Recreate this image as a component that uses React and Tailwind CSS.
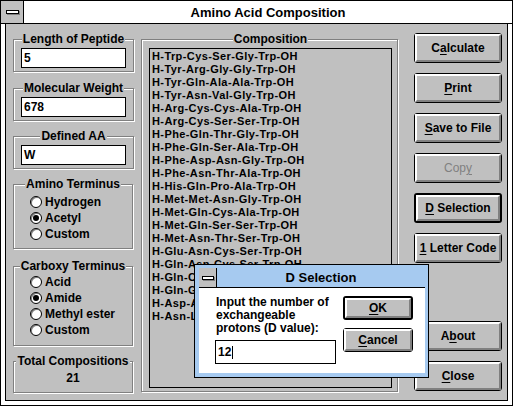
import React from 'react';

const ROWS = [
  'H-Trp-Cys-Ser-Gly-Trp-OH',
  'H-Tyr-Arg-Gly-Gly-Trp-OH',
  'H-Tyr-Gln-Ala-Ala-Trp-OH',
  'H-Tyr-Asn-Val-Gly-Trp-OH',
  'H-Arg-Cys-Cys-Ala-Trp-OH',
  'H-Arg-Cys-Ser-Ser-Trp-OH',
  'H-Phe-Gln-Thr-Gly-Trp-OH',
  'H-Phe-Gln-Ser-Ala-Trp-OH',
  'H-Phe-Asp-Asn-Gly-Trp-OH',
  'H-Phe-Asn-Thr-Ala-Trp-OH',
  'H-His-Gln-Pro-Ala-Trp-OH',
  'H-Met-Met-Asn-Gly-Trp-OH',
  'H-Met-Gln-Cys-Ala-Trp-OH',
  'H-Met-Gln-Ser-Ser-Trp-OH',
  'H-Met-Asn-Thr-Ser-Trp-OH',
  'H-Glu-Asn-Cys-Ser-Trp-OH',
  'H-Gln-Asn-Cys-Ser-Trp-OH',
  'H-Gln-Cys-Gly-Ser-Trp-OH',
  'H-Gln-Gln-Gly-Gly-Trp-OH',
  'H-Asp-Asn-Gly-Ser-Trp-OH',
  'H-Asn-Leu-Gly-Gly-Trp-OH',
];

// mnemonic letter
function U({ children }) {
  return <span className="underline decoration-1 underline-offset-[2px]">{children}</span>;
}

function SysMenu({ className = '' }) {
  return (
    <div className={`flex shrink-0 items-center justify-center border-r border-black bg-[#c0c0c0] ${className}`}>
      <div className="h-[4px] w-[13px] border border-black bg-white shadow-[1px_1px_0_#808080]" />
    </div>
  );
}

function Button({ children, isDefault, disabled, className = '' }) {
  return (
    <div className={`${isDefault ? 'border-2' : 'border'} shrink-0 rounded-[3px] border-black bg-[#c0c0c0] ${className}`}>
      <div className="flex h-full items-center justify-center border-2 border-t-white border-l-white border-r-[#808080] border-b-[#808080]">
        <span className={disabled ? 'font-normal text-[#808080]' : ''}>{children}</span>
      </div>
    </div>
  );
}

function Group({ label, className = '', children }) {
  return (
    <fieldset className={`border border-[#808080] shadow-[inset_1px_1px_0_#fff,1px_1px_0_#fff] ${className}`}>
      <legend className="mx-auto bg-[#c0c0c0] px-[1px] leading-[13px]">{label}</legend>
      {children}
    </fieldset>
  );
}

function Edit({ children, className = '' }) {
  return (
    <div className={`flex items-center border border-black bg-white pl-[2px] ${className}`}>{children}</div>
  );
}

function Radio({ label, checked }) {
  return (
    <div className="flex h-[16px] items-center gap-[3px] pl-[16px]">
      <span className="flex h-[12px] w-[12px] items-center justify-center rounded-full border border-black bg-white shadow-[inset_1px_1px_0_#808080]">
        {checked && <span className="h-[6px] w-[6px] rounded-full bg-black" />}
      </span>
      <span>{label}</span>
    </div>
  );
}

export default function App() {
  return (
    <div className="relative flex h-[406px] w-[513px] flex-col border border-black bg-white font-['Liberation_Sans',Arial,sans-serif] text-[12px] font-bold leading-[13px] text-black">
      {/* title bar */}
      <div className="flex h-[23px] shrink-0 border-b border-black">
        <SysMenu className="w-[23px]" />
        <div className="flex flex-1 items-center justify-center text-[13px]">Amino Acid Composition</div>
      </div>

      <div className="flex-1 px-[4px] pb-[4px]">
        <div className="flex h-full border-x border-b border-black bg-[#c0c0c0] pl-[7px] pt-[9px]">
          {/* left column */}
          <div className="flex w-[120px] flex-col">
            <Group label="Length of Peptide" className="px-[7px] pb-[3px] pt-[2px]">
              <Edit className="h-[20px] w-[105px]">5</Edit>
            </Group>
            <Group label="Molecular Weight" className="mt-[10px] px-[7px] pb-[3px] pt-[2px]">
              <Edit className="h-[20px] w-[105px]">678</Edit>
            </Group>
            <Group label="Defined AA" className="mt-[9px] px-[7px] pb-[3px] pt-[2px]">
              <Edit className="h-[20px] w-[105px]">W</Edit>
            </Group>
            <Group label="Amino Terminus" className="mt-[9px] pb-[6px] pt-[3px]">
              <Radio label="Hydrogen" />
              <Radio label="Acetyl" checked />
              <Radio label="Custom" />
            </Group>
            <Group label="Carboxy Terminus" className="mt-[11px] pb-[7px] pt-[1px]">
              <Radio label="Acid" />
              <Radio label="Amide" checked />
              <Radio label="Methyl ester" />
              <Radio label="Custom" />
            </Group>
            <Group label="Total Compositions" className="mt-[9px] pb-[7px] pt-[4px] text-center">
              <div>21</div>
            </Group>
          </div>

          {/* composition list */}
          <Group label="Composition" className="ml-[8px] h-[359px] w-[256px] pb-[3px] pl-[7px] pr-[5px] pt-[2px]">
            <div className="h-[340px] w-[243px] overflow-hidden border border-black pl-[2px] pt-[1px] text-[11px] tracking-[0.4px]">
              {ROWS.map((r) => (
                <div key={r} className="whitespace-nowrap">{r}</div>
              ))}
            </div>
          </Group>

          {/* buttons */}
          <div className="ml-[16px] flex flex-col gap-[10px]">
            <Button className="h-[30px] w-[88px]">C<U>a</U>lculate</Button>
            <Button className="h-[30px] w-[88px]"><U>P</U>rint</Button>
            <Button className="h-[30px] w-[88px]"><U>S</U>ave to File</Button>
            <Button className="h-[30px] w-[88px]" disabled>Cop<U>y</U></Button>
            <Button className="h-[30px] w-[88px]" isDefault><U>D</U> Selection</Button>
            <Button className="h-[30px] w-[88px]"><U>1</U> Letter Code</Button>
            <Button className="mt-[48px] h-[30px] w-[88px]">A<U>b</U>out</Button>
            <Button className="h-[30px] w-[88px]"><U>C</U>lose</Button>
          </div>
        </div>
      </div>

      {/* D Selection dialog */}
      <div className="absolute left-[193px] top-[263px] flex h-[114px] w-[235px] flex-col border border-black bg-[#a6caf0] pb-[4px] pl-[4px] pr-[3px] pt-[3px]">
        <div className="flex h-[20px] shrink-0 border-b border-black">
          <SysMenu className="w-[18px] [&>div]:w-[12px]" />
          <div className="flex flex-1 items-center justify-center text-[13px]">D Selection</div>
        </div>
        <div className="flex flex-1 bg-white">
          <div className="flex flex-col pl-[16px] pt-[8px]">
            <div className="pl-[1px]">
              <div>Input the number of</div>
              <div>exchangeable</div>
              <div>protons (D value):</div>
            </div>
            <Edit className="mt-[5px] h-[24px] w-[121px]">
              12<span className="ml-[1px] inline-block h-[13px] w-px bg-black" />
            </Edit>
          </div>
          <div className="ml-[7px] flex flex-col gap-[8px] pt-[8px]">
            <Button className="h-[24px] w-[70px]" isDefault><U>O</U>K</Button>
            <Button className="h-[24px] w-[70px]"><U>C</U>ancel</Button>
          </div>
        </div>
      </div>
    </div>
  );
}
